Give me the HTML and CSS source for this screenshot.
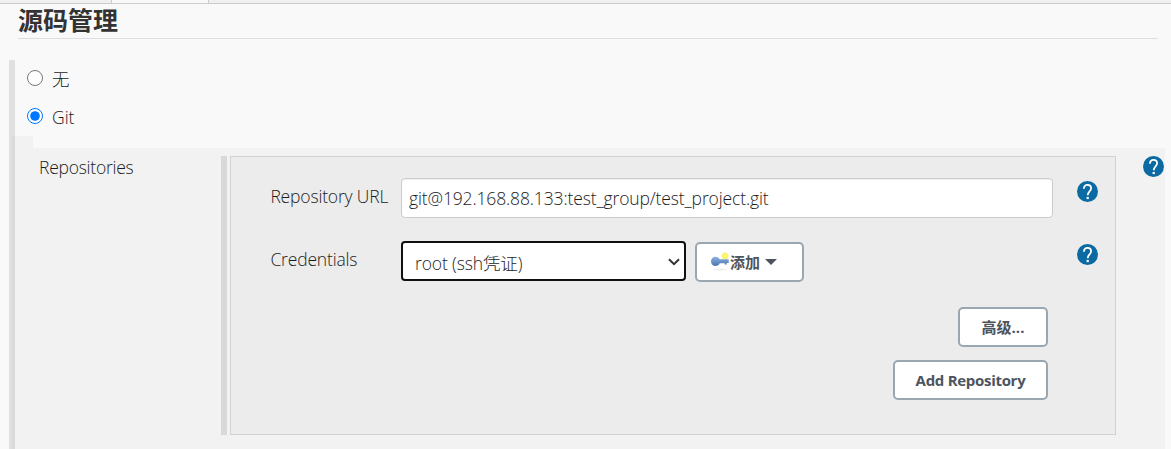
FILE: index.html
```html
<!DOCTYPE html>
<html lang="zh-CN">
<head>
<meta charset="utf-8">
<title>源码管理</title>
<link rel="stylesheet" href="styles.css">
</head>
<body>
<svg width="0" height="0" class="defs" aria-hidden="true">
  <symbol id="help" viewBox="0 0 22 22"><circle cx="11.500" cy="10.500" r="10.500" fill="#0b6aa2"/><path d="M7.900 7.700C7.900 5.200 9.400 3.800 11.500 3.800s3.600 1.400 3.600 3.400c0 2.900-3.400 3.400-3.400 7" fill="none" stroke="#fff" stroke-width="1.800"/><path fill="#fff" d="M10.600 15.900h2.200v2.200h-2.200z"/></symbol>
</svg>
<div class="tabs"><div class="tab first"></div><div class="tab active"></div><div class="tab rest"></div></div>
<h1 class="title"><span>源码管理</span></h1>
<main class="scm">
  <label class="option none"><input type="radio" name="scm"><span>无</span></label>
  <label class="option git"><input type="radio" name="scm" checked><span>Git</span></label>
  <div class="notch"></div>
  <section class="repos">
    <div class="repos-label"><span>Repositories</span></div>
    <div class="handle"></div>
    <div class="panel">
      <div class="row url-row">
        <span class="name">Repository URL</span>
        <div class="field input"><span>git@192.168.88.133:test_group/test_project.git</span></div>
        <svg class="help"><use href="#help"/></svg>
      </div>
      <div class="row cred-row">
        <span class="name">Credentials</span>
        <div class="field select"><span>root (ssh凭证)</span><svg width="12" height="8" viewBox="0 0 12 8"><path d="M1 1.200 6 6.200l5-5" fill="none" stroke="#333" stroke-width="2"/></svg></div>
        <div class="button add">
          <svg width="20" height="20" viewBox="0 0 20 20">
            <defs>
              <linearGradient id="key" x2="0" y2="1"><stop stop-color="#8cb1de"/><stop offset="1" stop-color="#4a76b2"/></linearGradient>
              <radialGradient id="spark"><stop stop-color="#fffca0"/><stop offset=".6" stop-color="#fbf04a"/><stop offset="1" stop-color="#fbf04a" stop-opacity="0"/></radialGradient>
            </defs>
            <ellipse cx="10" cy="17.500" rx="7" ry="1.200" fill="#f0f0f0"/>
            <circle cx="15" cy="4" r="4" fill="url(#spark)"/>
            <path fill="url(#key)" d="M5.500 4.800c2 0 3.400 1 4.200 2.500h9v3.700h-2v1.500h-2v-1.300H9.800c-.8 1.800-2.300 2.800-4.300 2.800C3 14 1 12 1 9.400s2-4.600 4.500-4.600z"/>
          </svg>
          <span>添加</span>
          <svg class="caret" width="12" height="6" viewBox="0 0 12 6"><path d="M0 0h12L6 6z" fill="#4d545d"/></svg>
        </div>
        <svg class="help"><use href="#help"/></svg>
      </div>
      <div class="actions">
        <div class="button advanced"><span>高级...</span></div>
        <div class="button add-repo"><span>Add Repository</span></div>
      </div>
    </div>
    <svg class="help outer"><use href="#help"/></svg>
  </section>
</main>
</body>
</html>
```
FILE: styles.css
```css
* { box-sizing: border-box; }
body { margin: 0; height: 449px; overflow: hidden; background: #f9f9f9; color: #1c1c1c; font: 300 17.5px/24px "Open Sans", "Noto Sans CJK SC", sans-serif; display: flex; flex-direction: column; }
.defs { position: absolute; }
span { white-space: nowrap; }
.tabs { display: flex; height: 4px; flex: none; border-bottom: 1px solid #ccc; background: #f0f0f0; }
.tab { border-right: 1px solid #ccc; }
.first { width: 112px; }
.active { width: 97px; background: #f9f9f9; }
.rest { flex: 1; border: 0; }
.title { margin: 0 13px 0 18px; height: 35px; flex: none; border-bottom: 1px solid #ddd; color: #333; font-size: 25px; line-height: 33px; font-weight: 700; }
.scm { margin: 21px 6px 0 9px; border-left: 6px solid #e0e0e0; flex: 1; display: flex; flex-direction: column; }
.option { display: flex; padding-left: 12px; align-items: center; }
.option input { margin: 0 9px 0 0; width: 16px; height: 16px; accent-color: #0075ff; }
.none { height: 36px; }
.git { height: 40px; }
.option span { margin-top: 1px; }
.notch { flex: none; width: 21px; height: 12px; margin-left: -3px; background: rgba(0,0,0,.027); }
.repos { flex: 1; margin-left: -3px; padding-top: 8px; background: rgba(0,0,0,.027); display: flex; align-items: flex-start; }
.repos-label { width: 209px; padding-left: 27px; margin-top: -1px; flex: none; letter-spacing: -.25px; }
.handle { width: 6px; height: 279px; background: #d9d9d9; }
.panel { width: 886px; height: 279px; margin-left: 3px; border: 1px solid #d2d2d2; background: #ececec; flex: none; padding: 21px 17px 0 39px; }
.row { display: flex; height: 40px; }
.cred-row { margin-top: 23px; }
.name { width: 131px; padding: 6px 0 0 .4px; flex: none; letter-spacing: -.17px; }
.field { display: flex; align-items: center; background: #fff; height: 40px; letter-spacing: -.13px; }
.input { width: 652px; border: 1px solid #ccc; border-radius: 4px; padding: 0 7px; box-shadow: inset 0 1px 1px rgba(0,0,0,.07); }
.select { width: 285px; border: 2px solid #101010; border-radius: 4px; padding: 4px 4px 0 12px; justify-content: space-between; }
.select svg { margin-top: -3px; }
.help { width: 22px; height: 22px; margin-left: auto; margin-top: 3px; flex: none; }
.outer { margin: 0 0 0 26px; }
.button { display: flex; align-items: center; justify-content: center; height: 40px; background: #fff; border: 2px solid #9aa7b1; border-radius: 5px; color: #4d545d; font-size: 15px; font-weight: 700; }
.add { width: 109px; margin-left: 9px; margin-top: 1px; justify-content: flex-start; padding-left: 13px; }
.caret { margin-left: 5px; }
.actions { display: flex; flex-direction: column; align-items: flex-end; margin: 26px 50px 0 0; gap: 13px; }
.advanced { width: 90px; }
.add-repo { width: 155px; letter-spacing: -.3px; }
```
